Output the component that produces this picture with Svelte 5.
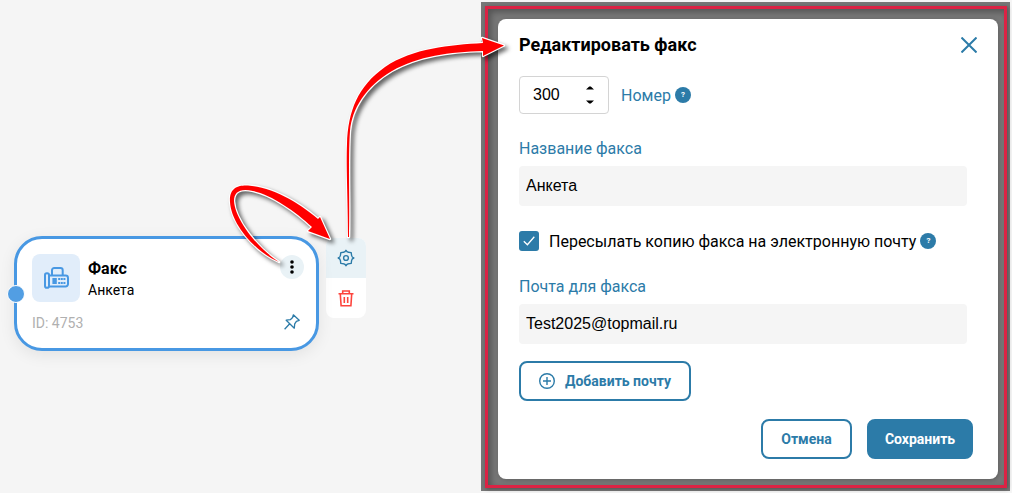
<script lang="ts">
	let faxNumber = $state(300);
	let faxName = $state('Анкета');
	let email = $state('Test2025@topmail.ru');
	let forwardCopy = $state(true);
</script>

<main class="workspace">
	<section class="canvas">
		<article class="node">
			<span class="port"></span>
			<header class="node-header">
				<div class="node-icon">
					<svg width="26" height="24" viewBox="0 0 26 24" fill="none" stroke="#4898e3" stroke-width="2" stroke-linejoin="round">
						<rect x="2" y="7.3" width="4" height="14.4" rx="1.8" />
						<path d="M6 9.5H22.6a2.4 2.4 0 0 1 2.4 2.4v6.2a2.4 2.4 0 0 1-2.4 2.4H6" />
						<path d="M9 9V4.2A2.2 2.2 0 0 1 11.2 2h6.3a2.2 2.2 0 0 1 2.2 2.2V9" />
						<path d="M9.4 12h4.4v6H9.4z" fill="#4898e3" stroke="none" />
						<path d="M15.2 13h2m.6 0h2m.6 0h2M15.2 17h2m.6 0h2m.6 0h2" />
					</svg>
				</div>
				<div class="node-text">
					<h3>Факс</h3>
					<p>{faxName}</p>
				</div>
				<button class="more" aria-label="Меню">
					<svg width="6" height="16" viewBox="0 0 6 16" fill="#000">
						<circle cx="3" cy="3" r="1.8" /><circle cx="3" cy="8" r="1.8" /><circle cx="3" cy="13" r="1.8" />
					</svg>
				</button>
			</header>
			<footer class="node-footer">
				<span>ID: 4753</span>
				<svg width="16" height="16" viewBox="0 0 16 16" fill="none" stroke="#2c7ba8" stroke-width="1.3" stroke-linejoin="round">
					<path d="M9.3.8 15.2 6.3 12.4 7.3 10.7 9.9 10.3 14.2 2.2 6.2 6.3 5.7 8.6 3.5ZM5.7 9.8.6 15.2" />
				</svg>
			</footer>
		</article>
		<nav class="actions">
			<button class="active" aria-label="Настройки">
				<svg width="18" height="18" viewBox="0 0 18 18" fill="none" stroke="#2c7ba8" stroke-width="1.4" stroke-linejoin="round">
					<path d="M9 1.3Q9.7 3.2 11.4 3.2L14.2 3.6 14.6 6.5Q14.8 8.2 16.8 9 14.8 9.8 14.6 11.5L14.2 14.4 11.4 14.7Q9.8 14.8 9 16.8 8.2 14.8 6.6 14.7L3.8 14.4 3.4 11.5Q3.2 9.8 1.2 9 3.2 8.2 3.4 6.5L3.8 3.6 6.6 3.2Q8.3 3.2 9 1.3Z" />
					<circle cx="9" cy="9" r="2.4" />
				</svg>
			</button>
			<button aria-label="Удалить">
				<svg width="16" height="17" viewBox="0 0 16 17" fill="none" stroke="#fd443d" stroke-width="1.6">
					<path d="M.5 3.8h15M4.7 3.5V1h6.6v2.5M2.3 4l.8 11.8h9.8L13.7 4M6.3 7v6M9.7 7v6" />
				</svg>
			</button>
		</nav>
	</section>

	<section class="overlay">
		<div class="frame">
			<form class="modal" onsubmit={(e) => e.preventDefault()}>
				<div class="title">
					<h2>Редактировать факс</h2>
					<button type="button" class="close" aria-label="Закрыть">
						<svg width="16" height="16" viewBox="0 0 16 16" stroke="#2c7ba8" stroke-width="2"><path d="m.5.5 15 15M15.5.5l-15 15" /></svg>
					</button>
				</div>
				<div class="number-row">
					<div class="number">
						<input aria-label="Номер" bind:value={faxNumber} />
						<svg width="8" height="20" viewBox="0 0 8 20" fill="#000"><path d="m0 4.5 3.2-3h1.6l3.2 3zM0 15.5h8l-3.2 3H3.2z" /></svg>
					</div>
					<span class="label">Номер</span>
					<span class="help">?</span>
				</div>
				<label class="field name">
					<span class="label">Название факса</span>
					<input bind:value={faxName} />
				</label>
				<div class="check-row">
					<button type="button" class="checkbox" aria-label="Пересылать копию" onclick={() => (forwardCopy = !forwardCopy)}>
						{#if forwardCopy}
							<svg width="12" height="10" viewBox="0 0 12 10" fill="none" stroke="#fff" stroke-width="1.3"><path d="m.8 5.2 3.6 3.5L11.3.8" /></svg>
						{/if}
					</button>
					<span class="check-text">Пересылать копию факса на электронную почту</span>
					<span class="help">?</span>
				</div>
				<label class="field mail">
					<span class="label">Почта для факса</span>
					<input bind:value={email} />
				</label>
				<button type="button" class="btn add">
					<svg width="16" height="16" viewBox="0 0 16 16" fill="none" stroke="#2c7ba8" stroke-width="1.4"><circle cx="8" cy="8" r="7.3" /><path d="M8 4v8M4 8h8" /></svg>
					Добавить почту
				</button>
				<div class="buttons">
					<button type="button" class="btn cancel">Отмена</button>
					<button class="btn save">Сохранить</button>
				</div>
			</form>
		</div>
	</section>

	<svg class="arrows" width="1012" height="493" viewBox="0 0 1012 493" fill="#f00" stroke="#fff" stroke-width="2.4" stroke-linejoin="round" paint-order="stroke">
		<path d="M279 262C252 250 231 222 230 202C229 187 239 185 248 185.5C272 187 298 202 318 219L320 217 330 239 308 231 312 227C296 212 272 195 253 191C240 188 234 192 234 201C235 219 257 248 279 262Z" />
		<path d="M348 237C348 200 346 166 347 144C348 111 358 86 385 67C413 48 450 45 483 43L482 38 504 45.5 483 56 483 51C450 52 418 56 392 71C365 87 352 109 350 131C348 158 350 205 349 237Z" />
	</svg>
</main>

<style>
	:global(body) {
		margin: 0;
	}

	* {
		box-sizing: border-box;
	}

	.workspace {
		position: relative;
		display: flex;
		width: 1012px;
		height: 493px;
		background: #f5f5f5;
		font-family: Roboto, sans-serif;
		color: #000;
		overflow: hidden;
	}

	button {
		display: flex;
		align-items: center;
		justify-content: center;
		padding: 0;
		border: 0;
		background: none;
		font-family: inherit;
	}

	h2,
	h3,
	p {
		margin: 0;
	}

	.canvas {
		display: flex;
		align-items: flex-start;
		gap: 7px;
		width: 481px;
		padding: 235.5px 0 0 13.5px;
	}

	.node {
		position: relative;
		width: 305.5px;
		height: 115px;
		padding: 15.5px 12px 0 15.5px;
		border: 3px solid #4898e3;
		border-radius: 28px;
		background: #fff;
		box-shadow: 0 4px 16px rgba(0, 0, 0, 0.08);
	}

	.port {
		position: absolute;
		left: -9.5px;
		top: 46px;
		width: 18px;
		height: 18px;
		border: 1px solid #fff;
		border-radius: 50%;
		background: #529ee3;
	}

	.node-header {
		display: flex;
	}

	.node-icon {
		display: flex;
		align-items: center;
		justify-content: center;
		width: 48px;
		height: 48px;
		border-radius: 8px;
		background: #e1edfa;
	}

	.node-text {
		flex: 1;
		padding: 4px 0 0 8px;
	}

	h3 {
		font-size: 16px;
		font-weight: 700;
		line-height: 22px;
	}

	p {
		font-size: 14px;
		line-height: 20px;
	}

	.more {
		width: 24px;
		height: 24px;
		margin-top: 1px;
		border-radius: 50%;
		background: #e9f2f6;
	}

	.node-footer {
		display: flex;
		align-items: center;
		justify-content: space-between;
		padding: 11px 4px 0 0;
		color: #b0b0b0;
		font-size: 14px;
		line-height: 20px;
	}

	.node-footer svg {
		margin-top: -3px;
	}

	.actions {
		width: 40px;
		margin-top: 2.5px;
		border-radius: 8px;
		background: #fff;
		overflow: hidden;
	}

	.actions button {
		width: 100%;
		height: 40px;
	}

	.actions .active {
		background: #e9f2f6;
	}

	.overlay {
		width: 529px;
		height: 489px;
		margin-top: 2px;
		padding: 4px 3px 3px 4px;
		background: #777;
	}

	.frame {
		height: 482px;
		padding: 10px;
		border: 3px solid #dc2244;
		box-shadow: 1px 1px 4px rgba(0, 0, 0, 0.35), inset 3px 3px 6px rgba(0, 0, 0, 0.3);
	}

	.modal {
		display: flex;
		flex-direction: column;
		width: 500px;
		height: 460px;
		padding: 15px 25px 20px 21px;
		border-radius: 8px;
		background: #fff;
		box-shadow: 1px 1px 4px rgba(0, 0, 0, 0.2);
	}

	.title {
		display: flex;
		justify-content: space-between;
		align-items: center;
		height: 20px;
	}

	h2 {
		font-size: 18px;
		font-weight: 700;
	}

	.close {
		margin: 2px -4px 0 0;
	}

	.number-row {
		display: flex;
		align-items: center;
		margin-top: 22px;
	}

	.number {
		display: flex;
		align-items: center;
		width: 90px;
		height: 38px;
		margin-right: 12px;
		padding: 0 14px 0 13px;
		border: 1px solid #d4d4d4;
		border-radius: 4px;
	}

	input {
		min-width: 0;
		padding: 0;
		border: 0;
		outline: 0;
		background: none;
		color: #000;
		font-family: 'Liberation Sans', Arial, sans-serif;
		font-size: 16px;
	}

	.number input {
		flex: 1;
	}

	.label {
		padding-top: 2px;
		color: #2c7ba8;
		font-size: 16px;
		line-height: 20px;
	}

	.help {
		width: 16px;
		height: 16px;
		margin-left: 4px;
		border-radius: 50%;
		background: #2c7ba8;
		color: #fff;
		font-size: 8px;
		font-weight: 700;
		line-height: 16px;
		text-align: center;
	}

	.field {
		display: flex;
		flex-direction: column;
		gap: 7px;
		width: 448px;
	}

	.field input {
		height: 40px;
		padding: 0 7px;
		border-radius: 4px;
		background: #f5f5f5;
	}

	.name {
		margin-top: 23px;
	}

	.mail {
		margin-top: 24px;
	}

	.check-row {
		display: flex;
		align-items: center;
		height: 20px;
		margin-top: 25px;
	}

	.checkbox {
		width: 20px;
		height: 20px;
		border-radius: 3px;
		background: #2c7ba8;
	}

	.check-text {
		margin-left: 10px;
		padding-top: 2px;
		font-size: 16px;
		line-height: 20px;
	}

	.btn {
		height: 40px;
		border: 2px solid #2c7ba8;
		border-radius: 8px;
		color: #2c7ba8;
		font-size: 14px;
		font-weight: 700;
	}

	.add {
		gap: 10px;
		width: 172px;
		margin-top: 17px;
	}

	.buttons {
		display: flex;
		justify-content: flex-end;
		gap: 15px;
		margin-top: 18px;
	}

	.cancel {
		width: 91px;
	}

	.save {
		width: 106px;
		background: #2c7ba8;
		color: #fff;
	}

	.arrows {
		position: absolute;
		inset: 0;
		pointer-events: none;
		filter: drop-shadow(3px 3px 2px rgba(0, 0, 0, 0.6));
	}
</style>
